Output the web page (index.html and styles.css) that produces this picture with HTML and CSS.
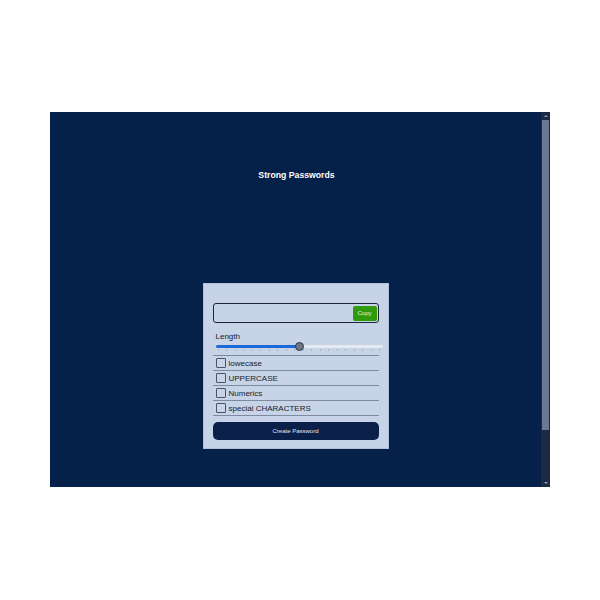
FILE: index.html
```html
<!DOCTYPE html>
<html lang="en">
<head>
<meta charset="utf-8">
<title>Strong Passwords</title>
<link rel="stylesheet" href="styles.css">
</head>
<body>
<div class="frame">
  <div class="viewport">
    <h1 class="title">Strong Passwords</h1>
    <div class="card">
      <div class="output">
        <span class="pw"></span>
        <button class="copy">Copy</button>
      </div>
      <div class="length">
        <div class="label">Length</div>
        <div class="slider">
          <div class="track"><div class="fill" style="width:50%"></div></div>
          <div class="thumb" style="left:50%"></div>
          <div class="ticks">
            <i></i><i></i><i></i><i></i><i></i><i></i><i></i><i></i><i></i><i></i><i></i><i></i><i></i><i></i><i></i><i></i><i></i><i></i><i></i><i></i>
          </div>
        </div>
      </div>
      <div class="row"><span class="box"></span>lowecase</div>
      <div class="row"><span class="box"></span>UPPERCASE</div>
      <div class="row"><span class="box"></span>Numerics</div>
      <div class="row"><span class="box"></span>special CHARACTERS</div>
      <button class="create">Create Password</button>
    </div>
  </div>
  <div class="scrollbar">
    <div class="arrow up"></div>
    <div class="sthumb"></div>
    <div class="arrow down"></div>
  </div>
</div>
</body>
</html>
```
FILE: styles.css
```css
html, body {
  margin: 0;
  padding: 0;
  background: #ffffff;
  font-family: "Liberation Sans", Arial, sans-serif;
}
.frame {
  margin: 112px 0 0 50px;
  width: 500px;
  height: 375px;
  display: flex;
  background: #052049;
}
.viewport {
  flex: 1;
  display: flex;
  flex-direction: column;
  align-items: center;
}
.title {
  margin: 58px 0 0;
  color: #ffffff;
  font-size: 8.7px;
  font-weight: bold;
  line-height: 11px;
  transform: translateX(1px);
}
.card {
  margin-top: 102px;
  width: 166px;
  padding: 19px 9px 8px;
  background: #c7d3e7;
  border: 1px solid #b3c0d6;
  display: flex;
  flex-direction: column;
}
.output {
  height: 16px;
  border: 1.5px solid #1d2636;
  border-radius: 3px;
  background: #c7d3e7;
  display: flex;
  justify-content: flex-end;
  align-items: center;
  padding: 1px;
}
.copy {
  width: 24px;
  height: 15px;
  padding: 0;
  border: none;
  border-radius: 2px;
  background: #2f9a0c;
  color: #e8f5e0;
  font-family: "Liberation Sans", Arial, sans-serif;
  font-size: 6px;
}
.length {
  margin-top: 9px;
  padding: 0 0 3px 3px;
  border-bottom: 1px solid #7d8aa0;
}
.label {
  font-size: 8px;
  line-height: 10px;
  color: #161c28;
}
.slider {
  position: relative;
  height: 10px;
  margin-right: -4px;
}
.track {
  position: absolute;
  left: 0;
  right: 0;
  top: 3px;
  height: 3px;
  background: #e6ebf3;
  border-radius: 2px;
}
.fill {
  height: 100%;
  background: #1c6ad6;
  border-radius: 2px;
}
.thumb {
  position: absolute;
  top: 0;
  width: 7px;
  height: 7px;
  margin-left: -4px;
  border-radius: 50%;
  background: #707784;
  border: 1px solid #2b3342;
}
.ticks {
  position: absolute;
  left: 2px;
  right: 2px;
  top: 7px;
  display: flex;
  justify-content: space-between;
}
.ticks i {
  width: 1px;
  height: 2px;
  background: #a8b3c4;
}
.row {
  display: flex;
  align-items: center;
  gap: 3px;
  height: 14px;
  padding-left: 3px;
  border-bottom: 1px solid #7d8aa0;
  font-size: 8px;
  color: #161c28;
}
.box {
  width: 8px;
  height: 8px;
  border: 1px solid #4a5466;
  border-radius: 1px;
}
.create {
  margin-top: 6px;
  height: 18px;
  border: none;
  border-radius: 5px;
  background: #0a2049;
  color: #e4e9f2;
  font-family: "Liberation Sans", Arial, sans-serif;
  font-size: 6px;
}
.scrollbar {
  width: 9px;
  display: flex;
  flex-direction: column;
  align-items: center;
  background: #1a2a45;
}
.arrow {
  width: 0;
  height: 0;
  margin: 3px 0;
  border-left: 2px solid transparent;
  border-right: 2px solid transparent;
}
.arrow.up {
  border-bottom: 2px solid #8f9ab0;
}
.arrow.down {
  margin-top: auto;
  border-top: 2px solid #8f9ab0;
}
.sthumb {
  width: 7px;
  height: 310px;
  background: #6c7893;
}
```
